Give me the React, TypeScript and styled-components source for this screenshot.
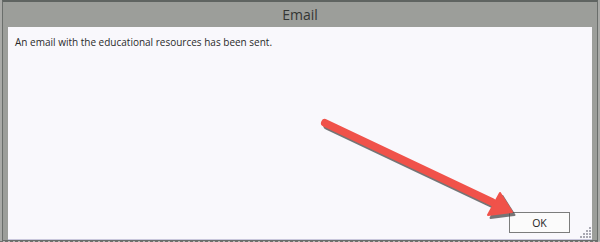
import styled, { createGlobalStyle } from 'styled-components'

const Global = createGlobalStyle`
  html, body {
    margin: 0;
    padding: 0;
    background: #a9aaa7;
  }
`

const Screen = styled.div`
  width: 600px;
  height: 242px;
  overflow: hidden;
  background: #a9aaa7;
  display: flex;
  flex-direction: column;
`

const Dialog = styled.div`
  position: relative;
  margin-left: 2px;
  width: 594px;
  height: 238px;
  background: #9c9e9a;
  border: 1px solid #6a6e6b;
  border-top: 2px solid #5f6461;
  display: flex;
  flex-direction: column;
`

const TitleBar = styled.div`
  height: 26px;
  display: flex;
  align-items: center;
  justify-content: center;
  font-family: 'Open Sans', 'Noto Sans', sans-serif;
  font-size: 14px;
  color: #343634;
  padding-bottom: 1px;
  box-sizing: border-box;
`

const Body = styled.div`
  position: relative;
  margin: 0 5px;
  height: 205px;
  background: #f9f8fc;
  border-bottom: 1px solid #c9c7dc;
  display: flex;
  flex-direction: column;
  justify-content: space-between;
  padding: 8px 22px 6px 7px;
`

const Message = styled.div`
  font-family: 'Open Sans', 'Noto Sans', sans-serif;
  font-size: 10px;
  color: #2a2a2a;
`

const Footer = styled.div`
  display: flex;
  justify-content: flex-end;
`

const OkButton = styled.button`
  width: 61px;
  height: 21px;
  background: #fbfbfb;
  border: 1px solid #7c7d7c;
  font-family: 'Open Sans', 'Noto Sans', sans-serif;
  font-size: 10.5px;
  color: #222;
  padding: 0;
`

const Grip = styled.svg`
  position: absolute;
  right: 1px;
  bottom: 1px;
`

const Arrow = styled.svg`
  position: absolute;
  left: 0;
  top: 0;
  pointer-events: none;
`

const Ground = styled.div`
  height: 2px;
  background: repeating-linear-gradient(to right, #6f716e 0 3px, #b9bab7 3px 5px);
`

export default function App() {
  return (
    <Screen>
      <Global />
      <Dialog>
        <TitleBar>Email</TitleBar>
        <Body>
          <Message>An email with the educational resources has been sent.</Message>
          <Footer>
            <OkButton>OK</OkButton>
          </Footer>
          <Grip width="11" height="11" viewBox="0 0 11 11">
            {[
              [9, 1], [9, 4], [6, 4], [9, 7], [6, 7], [3, 7], [9, 10], [6, 10], [3, 10], [0, 10],
            ].map(([x, y], i) => (
              <rect key={i} x={x} y={y - 1} width="2" height="2" fill="#a9a9b3" />
            ))}
          </Grip>
        </Body>
      </Dialog>
      <Ground />
      <Arrow width="600" height="242" viewBox="0 0 600 242">
        <g transform="translate(2.5,3)" fill="#4a4a4a" stroke="#4a4a4a" opacity="0.75">
          <line x1="325" y1="123" x2="492" y2="202" strokeWidth="8" strokeLinecap="round" />
          <polygon points="500,193 512,212 488,215" strokeWidth="2" strokeLinejoin="round" />
        </g>
        <g fill="#f0524a" stroke="#f0524a">
          <line x1="325" y1="123" x2="492" y2="202" strokeWidth="8" strokeLinecap="round" />
          <polygon points="500,193 512,212 488,215" strokeWidth="2" strokeLinejoin="round" />
        </g>
      </Arrow>
    </Screen>
  )
}
